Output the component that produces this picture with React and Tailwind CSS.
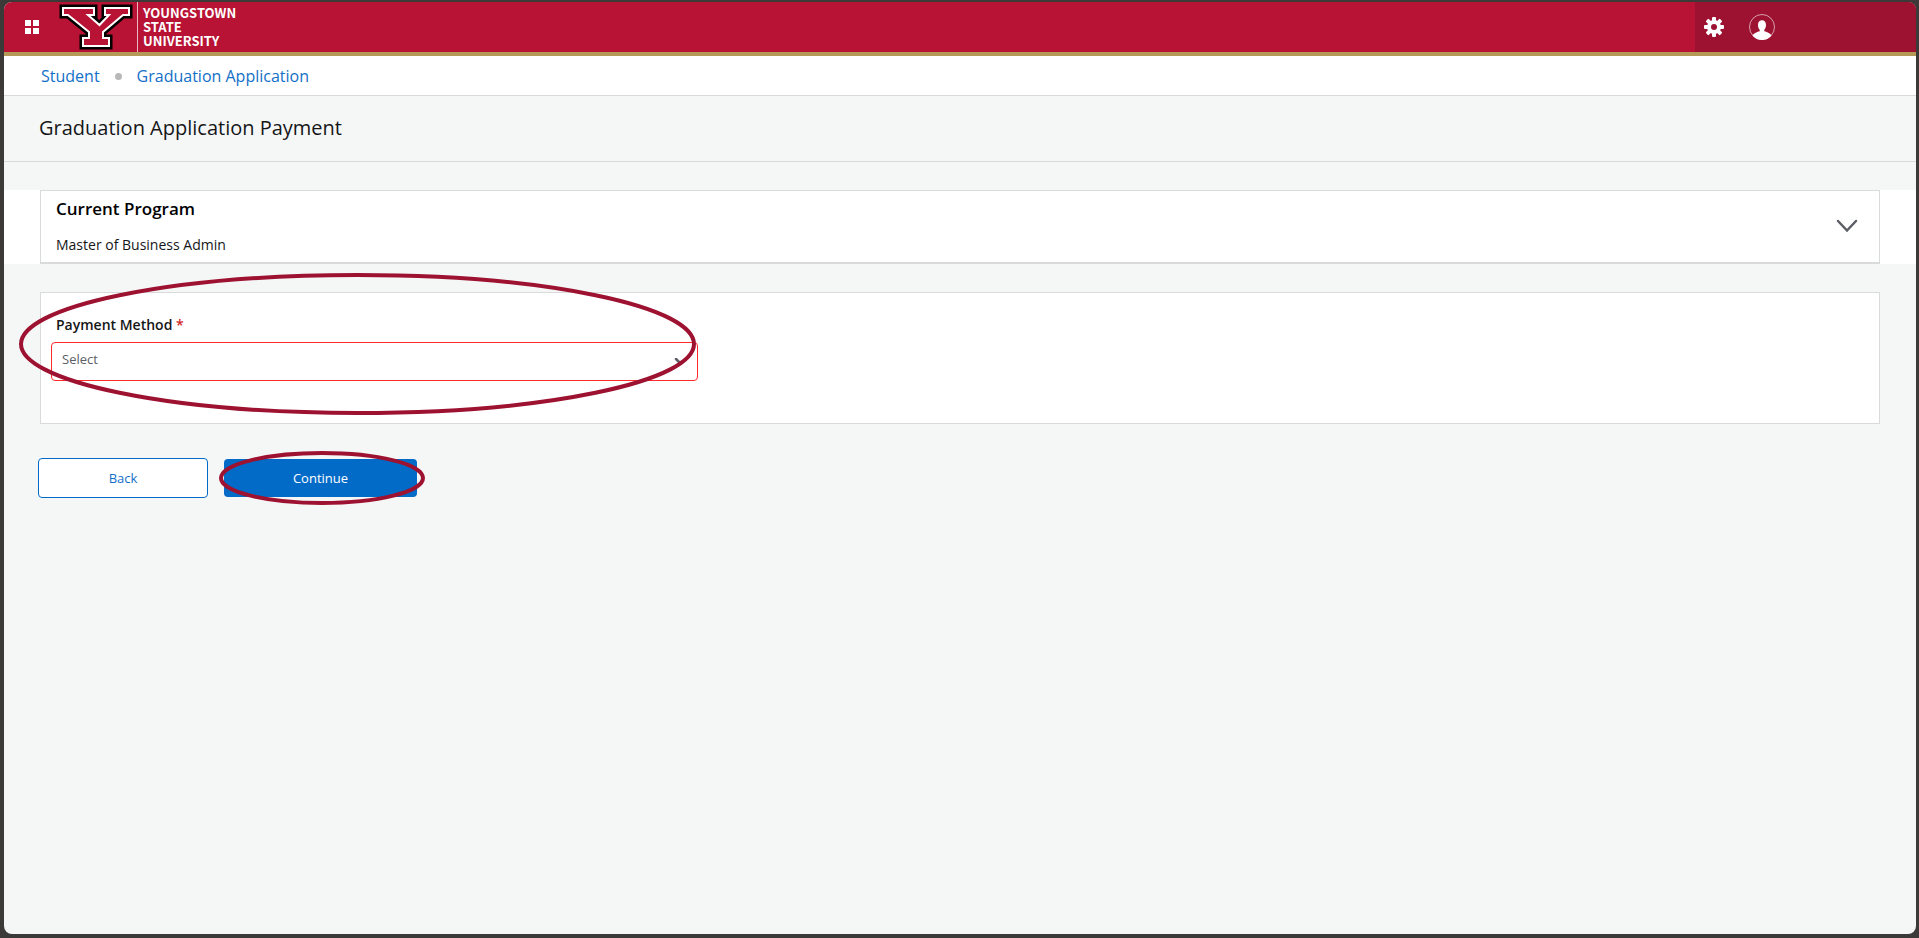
const ellipse = "pointer-events-none absolute overflow-visible";

function LogoMark() {
  const d =
    "M5 6H36V13H30L41.500 23L51 13H47V6H71V13H65L45 30V36H51V44H25V36H31V30L10 13H5Z";
  return (
    <svg width="76" height="50" viewBox="0 0 76 50" aria-hidden="true">
      <path d={d} fill="#b81234" stroke="#000" strokeWidth="7" />
      <path d={d} fill="#b81234" stroke="#fff" strokeWidth="2" />
    </svg>
  );
}

function Header() {
  return (
    <header className="flex h-[54px] items-stretch border-b-4 border-[#b59a57] bg-[#b81234]">
      <button type="button" aria-label="Menu" className="ml-[21px] mt-[18px] grid h-[14px] w-[14px] grid-cols-2 gap-[2px]">
        <span className="h-[6px] bg-white" />
        <span className="h-[6px] bg-white" />
        <span className="h-[6px] bg-white" />
        <span className="h-[6px] bg-white" />
      </button>
      <a href="#home" className="ml-[19px] flex">
        <LogoMark />
        <span className="ml-[3px] flex flex-col border-l border-white/70 pl-[5px] pt-1 font-['Noto_Sans_CJK_JP',sans-serif] text-[13px] font-bold leading-[14px] text-white">
          <span>YOUNGSTOWN</span>
          <span>STATE</span>
          <span>UNIVERSITY</span>
        </span>
      </a>
      <div className="ml-auto flex w-[221px] gap-[25px] bg-[#9e1231] pl-[9px] pt-[12px]">
        <button type="button" aria-label="Settings" className="h-[26px]">
          <svg width="20" height="26" viewBox="-10 -13 20 26" fill="#fff">
            {[0, 45, 90, 135].map((a) => (
              <rect key={a} x="-2" y="-10" width="4" height="20" rx="1" transform={`rotate(${a})`} />
            ))}
            <circle r="7" />
            <circle r="3" fill="#9e1231" />
          </svg>
        </button>
        <button type="button" aria-label="Profile" className="h-[26px]">
          <svg width="26" height="26" viewBox="0 0 26 26">
            <circle cx="13" cy="13" r="12.5" fill="none" stroke="#fff" strokeOpacity="0.6" />
            <path
              d="M13 6.300c2.500 0 4 1.700 4 4.700 0 2.200-.7 3.800-1.700 4.800v1.400c2.500.7 5.500 1.600 7.200 4.200A12.600 12.600 0 0 1 13 26a12.600 12.600 0 0 1-9.500-4.600c1.700-2.600 4.700-3.500 7.200-4.200v-1.400C9.700 14.800 9 13.200 9 11c0-3 1.500-4.700 4-4.700z"
              fill="#fff"
            />
          </svg>
        </button>
      </div>
    </header>
  );
}

export default function App() {
  return (
    <div className="flex min-h-screen flex-col bg-[#3b3a38] pb-[4px] pl-[4px] pr-[3px] pt-[2px] font-['Open_Sans',sans-serif] text-[#151618]">
      <div className="flex flex-1 flex-col overflow-hidden rounded-lg bg-[#f5f7f7]">
        <Header />
        <nav aria-label="Breadcrumb" className="flex h-10 items-center gap-[15px] border-b border-[#d9d9d9] bg-white pl-[37px] text-base text-[#136fc7]">
          <a href="#student">Student</a>
          <span className="mt-[2px] h-[7px] w-[7px] rounded-full bg-[#b8b8b8]" />
          <a href="#graduation">Graduation Application</a>
        </nav>
        <div className="flex h-[66px] items-center border-b border-[#d9d9d9] pb-[2px] pl-[35px]">
          <h1 className="text-xl font-normal">Graduation Application Payment</h1>
        </div>
        <main>
          <section className="mt-7 bg-white px-9">
            <div className="flex h-[74px] items-center justify-between border border-b-2 border-[#d9dbda] pl-[15px] pr-[21px]">
              <div className="pb-px">
                <h2 className="text-[17px] font-semibold leading-6 text-black">Current Program</h2>
                <p className="mt-[14px] text-sm leading-5">Master of Business Admin</p>
              </div>
              <button type="button" aria-label="Expand current program" className="pb-[2px]">
                <svg width="22" height="14" viewBox="0 0 22 14" fill="none" stroke="#5b5e65" strokeWidth="2.500" strokeLinecap="round">
                  <path d="M2 2l9 9.500L20 2" />
                </svg>
              </button>
            </div>
          </section>
          <section className="relative mx-9 mt-7 h-[132px] border border-[#d9dbda] bg-white pl-[10px] pt-[22px]">
            <label htmlFor="method" className="block pl-[5px] text-sm font-semibold leading-5">
              Payment Method <span className="text-[#d42828]">*</span>
            </label>
            <div className="relative mt-[7px] w-[647px]">
              <select id="method" className="block h-[39px] w-full appearance-none rounded-[4px] border border-[#ff2a2a] bg-white pb-[3px] pl-[10px] pr-8 text-[13px] text-[#5b5e65]">
                <option>Select</option>
              </select>
              <svg className="pointer-events-none absolute right-3 top-4" width="12" height="8" viewBox="0 0 12 8" fill="none" stroke="#5b5e65" strokeWidth="2.500" strokeLinecap="round">
                <path d="M2 1l4 4 1-1" />
              </svg>
            </div>
            <svg className={ellipse + " -left-[22px] -top-5"} width="677" height="142" viewBox="0 0 677 142" fill="none" aria-hidden="true">
              <ellipse cx="338.500" cy="71" rx="336.500" ry="69" stroke="#9e1231" strokeWidth="4" />
            </svg>
          </section>
          <div className="mt-[34px] flex items-center gap-4 pl-[34px] text-[13px]">
            <button type="button" className="h-10 w-[170px] rounded-[4px] border border-[#026bc8] bg-white pt-px text-[#136fc7]">
              Back
            </button>
            <div className="relative">
              <button type="button" className="block h-[38px] w-[193px] rounded-[4px] bg-[#026bc8] pt-px text-white">
                Continue
              </button>
              <svg className={ellipse + " -left-[5px] -top-2"} width="206" height="54" viewBox="0 0 206 54" fill="none" aria-hidden="true">
                <ellipse cx="103" cy="27" rx="101" ry="25" stroke="#9e1231" strokeWidth="4" />
              </svg>
            </div>
          </div>
        </main>
      </div>
    </div>
  );
}
